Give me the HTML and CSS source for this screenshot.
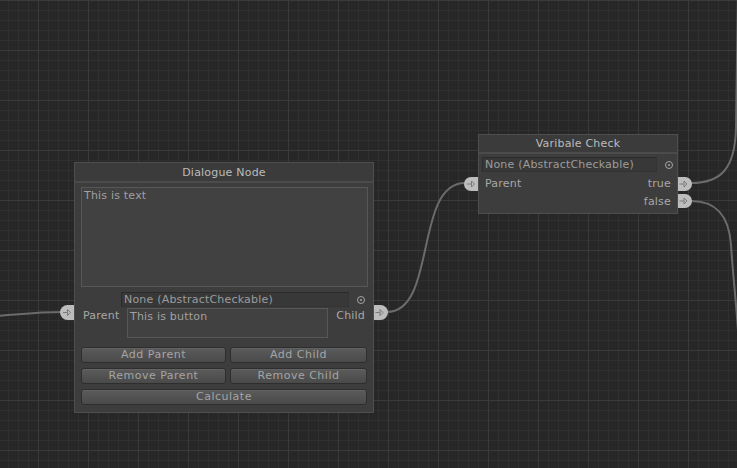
FILE: index.html
```html
<!DOCTYPE html>
<html>
<head>
<meta charset="utf-8">
<link rel="stylesheet" href="styles.css">
</head>
<body>
<div class="canvas">
  <svg class="wires" width="737" height="468" viewBox="0 0 737 468">
    <path d="M-40 318 C 10 316, 30 312, 62 312"/>
    <path d="M387 312 C 437 312, 414 183, 465 183"/>
    <path d="M691 183 C 720 183, 735 170, 736 128 L 738 -10"/>
    <path d="M691 201 C 716 201, 729 215, 731 245 S 735 290, 738 330"/>
  </svg>

  <div class="node node-dialogue">
    <div class="node-title">Dialogue Node</div>
    <div class="node-body">
      <div class="textarea textarea-main">This is text</div>
      <div class="obj-row obj-row-dialogue">
        <div class="obj-field obj-field-dialogue">None (AbstractCheckable)</div>
        <span class="picker"></span>
      </div>
      <div class="io-row">
        <span class="label">Parent</span>
        <div class="textarea textarea-btn">This is button</div>
        <span class="label label-right">Child</span>
      </div>
      <div class="btn-grid">
        <div class="btn">Add Parent</div>
        <div class="btn">Add Child</div>
        <div class="btn">Remove Parent</div>
        <div class="btn">Remove Child</div>
        <div class="btn btn-wide">Calculate</div>
      </div>
    </div>
    <span class="port port-in port-dialogue-in"><svg width="14" height="15" viewBox="0 0 14 15"><path d="M3 7.5H7.5M7.5 4.5L10.5 7.5L7.5 10.5Z"/></svg></span>
    <span class="port port-out port-dialogue-out"><svg width="14" height="15" viewBox="0 0 14 15"><path d="M1.5 7.5H6M6 4.5L9 7.5L6 10.5Z"/></svg></span>
  </div>

  <div class="node node-check">
    <div class="node-title">Varibale Check</div>
    <div class="node-body node-body-check">
      <div class="obj-row">
        <div class="obj-field obj-field-check">None (AbstractCheckable)</div>
        <span class="picker"></span>
      </div>
      <div class="check-row">
        <span class="label">Parent</span>
        <span class="label label-right">true</span>
      </div>
      <div class="check-row check-row-end">
        <span class="label label-right">false</span>
      </div>
    </div>
    <span class="port port-in port-check-in"><svg width="14" height="14" viewBox="0 0 14 14"><path d="M3 7H7.5M7.5 4L10.5 7L7.5 10Z"/></svg></span>
    <span class="port port-out port-check-true"><svg width="14" height="14" viewBox="0 0 14 14"><path d="M1.5 7H6M6 4L9 7L6 10Z"/></svg></span>
    <span class="port port-out port-check-false"><svg width="14" height="14" viewBox="0 0 14 14"><path d="M1.5 7H6M6 4L9 7L6 10Z"/></svg></span>
  </div>
</div>
</body>
</html>
```

FILE: styles.css
```css
html, body {
  margin: 0;
  padding: 0;
  background: #272727;
}

.canvas {
  position: relative;
  width: 737px;
  height: 468px;
  overflow: hidden;
  font-family: "DejaVu Sans", "Liberation Sans", sans-serif;
  font-size: 11px;
  letter-spacing: 0.2px;
  background-color: #272727;
  background-image:
    linear-gradient(to right, #3a3a3a 1px, transparent 1px),
    linear-gradient(to bottom, #3a3a3a 1px, transparent 1px),
    linear-gradient(to right, #2f2f2f 1px, transparent 1px),
    linear-gradient(to bottom, #2f2f2f 1px, transparent 1px);
  background-size: 50px 50px, 50px 50px, 10px 10px, 10px 10px;
  background-position: 38px 0, 0 0, 8px 0, 0 0;
}

.wires {
  position: absolute;
  left: 0;
  top: 0;
  fill: none;
  stroke: #6b6b6b;
  stroke-width: 2;
}

.node {
  position: absolute;
  box-sizing: border-box;
  border: 1px solid #4e4e4e;
  background: #3d3d3d;
  display: flex;
  flex-direction: column;
}

.node-dialogue {
  left: 74px;
  top: 162px;
  width: 300px;
  height: 251px;
}

.node-check {
  left: 478px;
  top: 134px;
  width: 200px;
  height: 80px;
}

.node-title {
  height: 18px;
  line-height: 19px;
  text-align: center;
  color: #bcbcbc;
  background: #3b3b3b;
  border-bottom: 2px solid #4b4b4b;
}

.node-check .node-title {
  height: 17px;
  line-height: 18px;
}

.node-body {
  display: flex;
  flex-direction: column;
  padding: 4px 5px 0 6px;
}

.node-body-check {
  padding: 3px 3px 0 3px;
}

.textarea {
  box-sizing: border-box;
  border: 1px solid #575757;
  background: #414141;
  color: #a0a0a0;
  padding: 1px 2px;
  line-height: 13px;
}

.textarea-main {
  height: 100px;
}

.obj-row {
  display: flex;
  align-items: center;
  height: 15px;
}

.obj-row-dialogue {
  margin-top: 5px;
  padding-left: 40px;
}

.obj-field {
  box-sizing: border-box;
  height: 15px;
  line-height: 13px;
  border: 1px solid #2b2b2b;
  border-right-color: #333;
  border-bottom-color: #333;
  background: #383838;
  color: #9c9c9c;
  padding: 0 2px;
  white-space: nowrap;
  overflow: hidden;
}

.obj-field-dialogue {
  width: 228px;
}

.obj-field-check {
  width: 175px;
}

.picker {
  box-sizing: border-box;
  width: 8px;
  height: 8px;
  margin-left: 8px;
  border: 1px solid #a4a4a4;
  border-radius: 50%;
  display: flex;
  align-items: center;
  justify-content: center;
}

.picker::after {
  content: "";
  width: 2px;
  height: 2px;
  background: #a4a4a4;
  border-radius: 50%;
}

.io-row {
  display: flex;
  align-items: flex-start;
  margin-top: 1px;
}

.label {
  color: #a8a8a8;
  line-height: 14px;
}

.io-row .label {
  margin-top: 1px;
}

.io-row .label:first-child {
  padding-left: 2px;
  width: 44px;
}

.label-right {
  margin-left: auto;
  padding-right: 3px;
}

.textarea-btn {
  width: 201px;
  height: 30px;
}

.btn-grid {
  display: grid;
  grid-template-columns: 145px 137px;
  grid-auto-rows: 16px;
  column-gap: 4px;
  row-gap: 5px;
  margin-top: 9px;
}

.btn {
  box-sizing: border-box;
  border: 1px solid #2e2e2e;
  border-radius: 3px;
  background: linear-gradient(to bottom, #5b5b5b, #4a4a4a);
  box-shadow: inset 0 1px 0 #636363;
  color: #a4a4a4;
  text-align: center;
  line-height: 14px;
  letter-spacing: 0.5px;
}

.btn-wide {
  grid-column: 1 / 3;
}

.check-row {
  display: flex;
  align-items: center;
  height: 18px;
  margin-top: 3px;
}

.check-row .label:first-child {
  padding-left: 3px;
}

.check-row-end {
  margin-top: 0;
}

.check-row .label-right {
  padding-right: 3px;
}

.port {
  position: absolute;
  width: 14px;
  height: 15px;
  background: #bdbdbd;
  display: block;
}

.port svg {
  display: block;
  fill: none;
  stroke: #7a7a7a;
  stroke-width: 1;
}

.port-in {
  left: -15px;
  border-radius: 8px 0 0 8px;
}

.port-out {
  right: -15px;
  border-radius: 0 8px 8px 0;
}

.port-dialogue-in,
.port-dialogue-out {
  top: 142px;
}

.port-check-in,
.port-check-true,
.port-check-false {
  height: 14px;
}

.port-check-in,
.port-check-true {
  top: 42px;
}

.port-check-false {
  top: 59px;
}
```
